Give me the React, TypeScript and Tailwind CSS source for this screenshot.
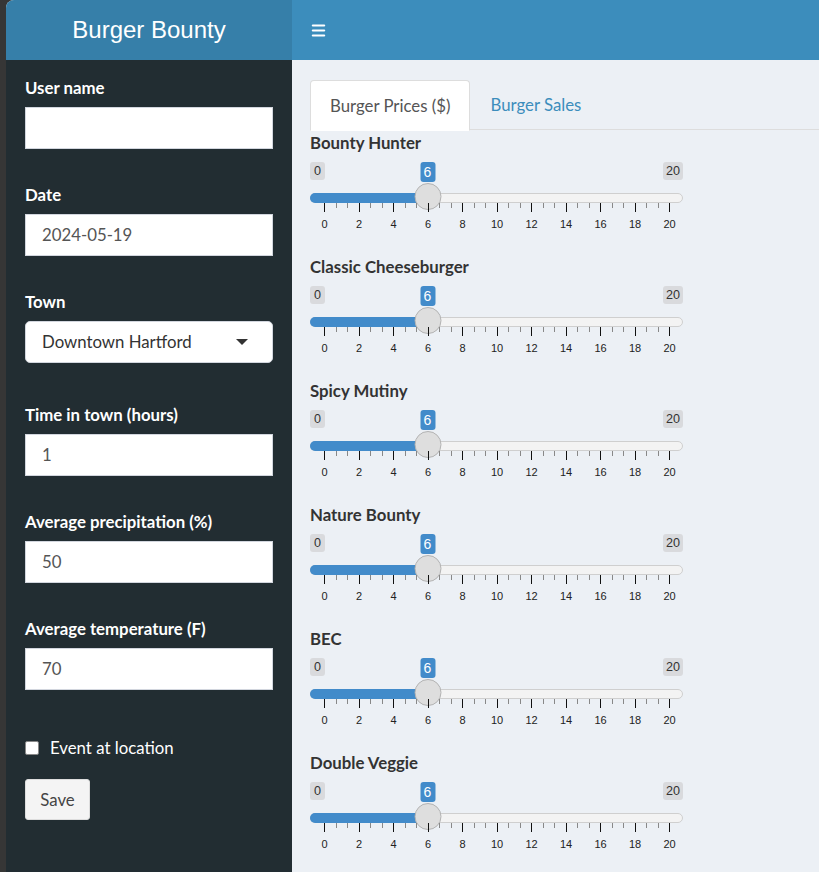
import { Menu } from "lucide-react";

const fields = [
  { label: "User name", value: "" },
  { label: "Date", value: "2024-05-19" },
];
const fields2 = [
  { label: "Time in town (hours)", value: "1" },
  { label: "Average precipitation (%)", value: "50" },
  { label: "Average temperature (F)", value: "70" },
];
const burgers = ["Bounty Hunter", "Classic Cheeseburger", "Spicy Mutiny", "Nature Bounty", "BEC", "Double Veggie"];

const MIN = 0;
const MAX = 20;
const X0 = 14;
const SPAN = 345;

function pos(v: number) {
  return X0 + ((v - MIN) / (MAX - MIN)) * SPAN;
}

function Field({ label, value }: { label: string; value: string }) {
  return (
    <div className="mb-[36px]">
      <div className="font-bold text-white leading-5 mb-[9px]">{label}</div>
      <div className="h-[42px] bg-white border border-[#d2d6de] pl-4 flex items-center text-[#555]">{value}</div>
    </div>
  );
}

function PriceSlider({ label, value }: { label: string; value: number }) {
  const majors = Array.from({ length: 11 }, (_, k) => k);
  const handle = pos(value);
  return (
    <div className="h-[124px]">
      <div className="font-bold text-[#333] leading-5">{label}</div>
      <div className="relative w-[373px] h-[104px] font-['Liberation_Sans',Arial,sans-serif]">
        {/* min / max / value badges */}
        <span className="absolute left-0 top-[9px] h-[18px] px-[4px] rounded-[3px] bg-[#d9dadd] text-[#333] text-[12.6px] leading-[18px]">{MIN}</span>
        <span className="absolute right-0 top-[9px] h-[18px] px-[3px] rounded-[3px] bg-[#d9dadd] text-[#333] text-[12.6px] leading-[18px]">{MAX}</span>
        <span
          className="absolute top-[9px] h-[20px] w-[15px] -translate-x-1/2 rounded-[3px] bg-[#428bca] text-white text-[14px] leading-[20px] text-center"
          style={{ left: handle }}
        >
          {value}
        </span>

        {/* track */}
        <div className="absolute left-0 right-0 top-[40px] h-[10px] rounded-full bg-[#f3f3f3] border border-[#cfcfcf]" />
        <div className="absolute left-0 top-[40px] h-[10px] rounded-l-full bg-[#428bca]" style={{ width: handle }} />
        <div
          className="absolute top-[30px] w-[27px] h-[27px] -translate-x-1/2 rounded-full bg-[#dedede] border border-[#b3b3b3]"
          style={{ left: handle }}
        />

        {/* grid */}
        {majors.map((k) => {
          const x = X0 + k * 34.5;
          return (
            <div key={k}>
              <div className="absolute top-[50px] w-px h-[9px] bg-[#111]" style={{ left: x }} />
              {k < 10 && (
                <>
                  <div className="absolute top-[50px] w-px h-[5px] bg-[#888]" style={{ left: x + 11.5 }} />
                  <div className="absolute top-[50px] w-px h-[5px] bg-[#888]" style={{ left: x + 23 }} />
                </>
              )}
              <span
                className="absolute top-[65px] -translate-x-1/2 text-[11px] leading-3 text-[#222]"
                style={{ left: x + 0.5 }}
              >
                {k * 2}
              </span>
            </div>
          );
        })}
      </div>
    </div>
  );
}

export default function App() {
  return (
    <div className="w-[819px] h-[872px] bg-[#363636] pl-[6px] overflow-hidden font-['Lato','Liberation_Sans',sans-serif] text-[16.8px]">
      <div className="h-full rounded-tl-[8px] overflow-hidden flex flex-col bg-[#ecf0f5]">
        {/* ── HEADER ── */}
        <header className="h-[60px] flex shrink-0">
          <div className="w-[286px] bg-[#367fa9] flex items-center justify-center text-white text-[24px] font-['Liberation_Sans',Arial,sans-serif]">
            Burger Bounty
          </div>
          <div className="flex-1 bg-[#3c8dbc] flex items-center pl-[18px]">
            <Menu className="w-[17px] h-[17px] text-white" strokeWidth={3} />
          </div>
        </header>

        <div className="flex flex-1 min-h-0">
          {/* ── SIDEBAR ── */}
          <aside className="w-[286px] bg-[#222d32] px-[19px] pt-[18px]">
            {fields.map((f) => (
              <Field key={f.label} {...f} />
            ))}
            <div className="mb-[42px]">
              <div className="font-bold text-white leading-5 mb-[9px]">Town</div>
              <div className="h-[42px] bg-white border border-[#d2d6de] rounded-[5px] pl-4 pr-6 flex items-center justify-between text-[#333]">
                <span>Downtown Hartford</span>
                <span className="w-0 h-0 border-l-[6px] border-r-[6px] border-t-[6px] border-l-transparent border-r-transparent border-t-[#333]" />
              </div>
            </div>
            {fields2.map((f) => (
              <Field key={f.label} {...f} />
            ))}
            <label className="flex items-center gap-[11px] text-white mt-[45px]">
              <span className="w-[14px] h-[14px] bg-white border border-[#888] rounded-[2px]" />
              Event at location
            </label>
            <button className="mt-[19px] h-[41px] w-[65px] bg-[#f4f4f4] border border-[#ddd] rounded-[3px] text-[#444]">
              Save
            </button>
          </aside>

          {/* ── MAIN ── */}
          <main className="flex-1 pl-[18px] pt-[20px]">
            <div className="flex h-[50px] border-b border-[#ddd]">
              <div className="h-[51px] px-[19px] flex items-center bg-white border border-[#ddd] border-b-transparent rounded-t-[4px] text-[#555]">
                Burger Prices ($)
              </div>
              <div className="px-[20px] flex items-center text-[#3c8dbc]">Burger Sales</div>
            </div>
            <div className="pt-[3px]">
              {burgers.map((b) => (
                <PriceSlider key={b} label={b} value={6} />
              ))}
            </div>
          </main>
        </div>
      </div>
    </div>
  );
}
